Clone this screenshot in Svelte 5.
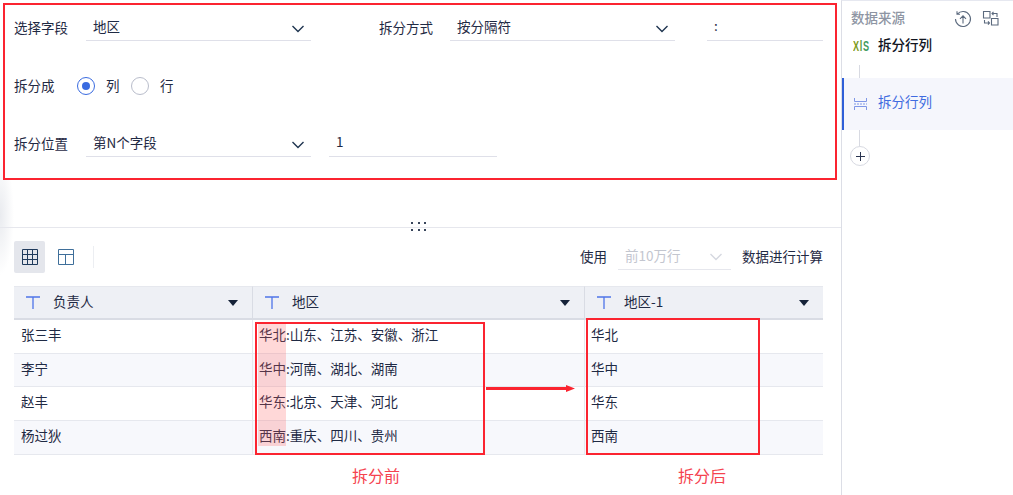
<script>
  let rows = [
    { name: '张三丰', region: '华北:山东、江苏、安徽、浙江', first: '华北' },
    { name: '李宁', region: '华中:河南、湖北、湖南', first: '华中' },
    { name: '赵丰', region: '华东:北京、天津、河北', first: '华东' },
    { name: '杨过狄', region: '西南:重庆、四川、贵州', first: '西南' }
  ]
  let columns = ['负责人', '地区', '地区-1']
</script>

<div class="app">
  <div class="main">
    <section class="panel">
      <div class="form-row">
        <span class="label">选择字段</span>
        <div class="select w225"><span>地区</span><svg class="chev" viewBox="0 0 14 8"><path d="M1.5 1 7 6.5 12.5 1" /></svg></div>
        <span class="label second">拆分方式</span>
        <div class="select w225"><span>按分隔符</span><svg class="chev" viewBox="0 0 14 8"><path d="M1.5 1 7 6.5 12.5 1" /></svg></div>
        <div class="input sep">:</div>
      </div>
      <div class="form-row">
        <span class="label narrow">拆分成</span>
        <span class="radio on"></span><span class="radio-text">列</span>
        <span class="radio"></span><span class="radio-text">行</span>
      </div>
      <div class="form-row">
        <span class="label">拆分位置</span>
        <div class="select w225"><span>第N个字段</span><svg class="chev" viewBox="0 0 14 8"><path d="M1.5 1 7 6.5 12.5 1" /></svg></div>
        <div class="input num">1</div>
      </div>
    </section>

    <div class="splitter">
      <div class="grip">
        {#each Array(6) as _}<i></i>{/each}
      </div>
    </div>

    <div class="toolbar">
      <button class="tool active" aria-label="表格">
        <svg viewBox="0 0 16 16" width="16" height="16"><path d="M.5.5h15v15H.5zM5.5.5v15M10.5.5v15M.5 5.5h15M.5 10.5h15" /></svg>
      </button>
      <button class="tool" aria-label="布局">
        <svg viewBox="0 0 16 16" width="16" height="16"><path d="M.5.5h15v15H.5zM.5 5.5h15M7.5 5.5v10" /></svg>
      </button>
      <span class="tool-sep"></span>
      <span class="spacer"></span>
      <span class="use">使用</span>
      <div class="limit"><span>前10万行</span><svg class="chev light" viewBox="0 0 14 8"><path d="M1.5 1 7 6.5 12.5 1" /></svg></div>
      <span class="calc">数据进行计算</span>
    </div>

    <div class="table-wrap">
      <table>
        <colgroup>
          <col style="width: 239px" />
          <col style="width: 332px" />
          <col style="width: 238px" />
        </colgroup>
        <thead>
          <tr>
            {#each columns as col}
              <th>
                <div class="th-in">
                  <svg class="t-icon" viewBox="0 0 14 13"><path d="M0 1h14M7 1v12" /></svg>
                  <span>{col}</span>
                  <i class="tri"></i>
                </div>
              </th>
            {/each}
          </tr>
        </thead>
        <tbody>
          {#each rows as row}
            <tr>
              <td>{row.name}</td>
              <td>{row.region}</td>
              <td>{row.first}</td>
            </tr>
          {/each}
        </tbody>
      </table>
      <!-- annotations drawn over the table -->
      <div class="mark-fill"></div>
      <div class="mark before"></div>
      <div class="mark after"></div>
      <svg class="arrow" viewBox="0 0 90 8" width="90" height="8"><path d="M0 2h80V0l9 3.500-9 3.500V5H0z" /></svg>
    </div>

    <div class="captions">
      <span class="cap-before">拆分前</span>
      <span class="cap-after">拆分后</span>
    </div>
  </div>

  <aside class="side">
    <div class="side-head">
      <span class="side-title">数据来源</span>
      <svg class="head-icon" viewBox="0 0 16 16" width="16" height="16"><path d="M2.400 3A7.500 7.500 0 1 1 .5 8M2 .3v3h3M8 12.500V5M5 7.800 8 4.800l3 3" /></svg>
      <svg class="head-icon" viewBox="0 0 16 16" width="16" height="16"><path d="M.5.5h6.500V7H.5zM8.500 7.500H15V14H8.500zM9 2.500h5v3.500M10.500.8 9 2.500l1.500 1.700M6.500 12H1.500V9M5 10.300 6.500 12 5 13.700" /></svg>
    </div>
    <div class="source">
      <span class="xls"><span class="x">X</span><span class="l">l</span><span class="s">S</span></span>
      <span class="source-name">拆分行列</span>
    </div>
    <div class="line top"></div>
    <div class="step">
      <svg viewBox="0 0 13 12" width="13" height="12"><path d="M.5 0v3.500h12V0M.5 12V8.500h12V12" /><path class="dash" d="M0 6h13" /></svg>
      <span>拆分行列</span>
    </div>
    <div class="line bottom"></div>
    <button class="add" aria-label="添加">
      <svg viewBox="0 0 9 9" width="9" height="9"><path d="M4.500 0v9M0 4.500h9" /></svg>
    </button>
  </aside>
</div>

<style>
  :global(body) {
    margin: 0;
    background: #fff;
    color: #1f2a44;
    font-family: "Noto Sans CJK SC", "Liberation Sans", sans-serif;
    font-size: 13.5px;
  }

  .app {
    display: flex;
    width: 1013px;
    height: 495px;
    overflow: hidden;
  }

  .main {
    width: 841px;
    flex-shrink: 0;
    background: radial-gradient(14px 60px at 0 215px, #e9ebef, rgba(255, 255, 255, 0));
  }

  .panel {
    box-sizing: border-box;
    width: 834px;
    height: 177px;
    margin: 3px 0 0 3px;
    padding: 12px 0 0 9px;
    border: 2px solid #fb2430;
    background: #fff;
    display: flex;
    flex-direction: column;
    gap: 34px;
  }

  .form-row {
    display: flex;
    align-items: center;
    height: 24px;
  }

  .label {
    width: 72px;
    flex-shrink: 0;
    margin-top: -4px;
  }
  .label.narrow { width: 63px; }
  .label.second { margin-left: 68px; width: 71px; }

  .select {
    box-sizing: border-box;
    height: 24px;
    padding: 0 6px 0 7px;
    border-bottom: 1.5px solid #dfe0e9;
    display: flex;
    align-items: center;
    justify-content: space-between;
  }
  .select span { margin-top: -6px; }
  .w225 { width: 225px; }

  .chev {
    width: 14px;
    height: 8px;
    fill: none;
    stroke: #1f3550;
    stroke-width: 1.4;
  }
  .chev.light { stroke: #d5d8e0; }

  .input {
    box-sizing: border-box;
    height: 24px;
    padding: 0 7px;
    border-bottom: 1.5px solid #dfe0e9;
    line-height: 17px;
  }
  .input.sep { width: 116px; margin-left: 32px; }
  .input.num { width: 168px; margin-left: 18px; }

  .radio {
    box-sizing: border-box;
    width: 18px;
    height: 18px;
    margin-top: -2px;
    border: 1px solid #b9bdcb;
    border-radius: 50%;
    position: relative;
  }
  .radio.on { border-color: #3a6be0; }
  .radio.on::after {
    content: '';
    position: absolute;
    inset: 4px;
    border-radius: 50%;
    background: #3a6be0;
  }
  .radio-text { margin: -5px 11.5px 0 11px; }

  .splitter {
    height: 47px;
    border-bottom: 1px solid #e6e7ed;
    position: relative;
  }
  .grip {
    position: absolute;
    left: 411px;
    top: 42px;
    display: grid;
    grid-template-columns: repeat(3, 2px);
    column-gap: 4.5px;
    row-gap: 5px;
  }
  .grip i {
    height: 2px;
    background: #39465c;
  }

  .toolbar {
    display: flex;
    align-items: center;
    height: 32px;
    margin: 13px 18px 0 14px;
  }

  .tool {
    width: 31px;
    height: 32px;
    padding: 0;
    border: 0;
    border-radius: 2px;
    background: none;
    display: flex;
    align-items: center;
    justify-content: center;
    margin-right: 5px;
  }
  .tool.active { background: #e4e6ec; }
  .tool svg {
    fill: none;
    stroke: #1f3a5c;
    stroke-width: 1;
  }
  .tool + .tool svg { stroke: #3f6f9a; }

  .tool-sep {
    width: 1px;
    height: 22px;
    margin-left: 7px;
    background: #eceef2;
  }
  .spacer { flex: 1; }

  .use, .calc { margin-top: -3px; }

  .limit {
    box-sizing: border-box;
    width: 113px;
    height: 26px;
    margin: 0 11px;
    padding: 0 8px 0 7px;
    border-bottom: 1px solid #e6e7ed;
    color: #c3c6cf;
    display: flex;
    align-items: center;
    justify-content: space-between;
  }
  .limit span { margin-top: -3px; }

  .table-wrap {
    position: relative;
    width: 809px;
    margin: 13px 0 0 14px;
  }

  table {
    width: 809px;
    table-layout: fixed;
    border-collapse: separate;
    border-spacing: 0;
  }

  th {
    box-sizing: border-box;
    height: 34px;
    padding: 0 14px 0 12px;
    background: #eef0f5;
    border-top: 1px solid #e6e8ee;
    border-right: 1px solid #d9dce4;
    border-bottom: 2px solid #d9dce4;
    font-weight: 400;
    text-align: left;
  }
  th:last-child { border-right: 0; }

  .th-in {
    display: flex;
    align-items: center;
    gap: 13px;
  }
  .th-in span { flex: 1; margin-top: -3px; }

  .t-icon {
    width: 14px;
    height: 13px;
    fill: none;
    stroke: #4f74e8;
    stroke-width: 1.3;
  }

  .tri {
    width: 0;
    height: 0;
    border-left: 5px solid transparent;
    border-right: 5px solid transparent;
    border-top: 6px solid #152238;
  }

  td {
    box-sizing: border-box;
    height: 34px;
    padding: 0 7px 5px;
    border-bottom: 1px solid #e6e8ee;
    border-right: 1px solid #e6e8ee;
  }
  td + td { padding-left: 6px; }
  td:last-child { border-right: 0; }
  tbody tr:nth-child(2) td { height: 33px; }
  tbody tr:nth-child(even) td { background: #f7f8fc; }

  .mark {
    position: absolute;
    box-sizing: border-box;
    border: 2px solid #fb2430;
    pointer-events: none;
  }
  .mark.before { left: 241px; top: 36px; width: 230px; height: 133px; }
  .mark.after { left: 572px; top: 32px; width: 174px; height: 137px; }

  .mark-fill {
    position: absolute;
    left: 244px;
    top: 37px;
    width: 28px;
    height: 123px;
    background: rgba(255, 90, 90, 0.24);
  }

  .arrow {
    position: absolute;
    left: 472px;
    top: 99px;
    fill: #fb2430;
  }

  .captions {
    margin: 8px 0 0 14px;
    display: grid;
    grid-template-columns: 238px 332px 238px;
    color: #f5434f;
    font-size: 16px;
  }
  .cap-before { grid-column: 2; padding-left: 100px; }
  .cap-after { grid-column: 3; padding-left: 94px; }

  .side {
    flex: 1;
    border-left: 1px solid #dcdee6;
    border-top: 1px solid #e6e8f0;
  }

  .side-head {
    display: flex;
    align-items: center;
    height: 34px;
    padding-left: 9px;
  }
  .side-title {
    width: 104px;
    margin-top: -3px;
    color: #8e95a3;
    font-weight: 500;
  }
  .head-icon {
    fill: none;
    stroke: #5c6a7e;
    stroke-width: 1.1;
    margin: 2px 12px 0 0;
    overflow: visible;
  }

  .source {
    display: flex;
    align-items: center;
    height: 22px;
    padding-left: 11px;
  }
  .xls {
    width: 25px;
    flex-shrink: 0;
    font: 700 14px "Liberation Sans", sans-serif;
    display: flex;
    transform: scaleX(0.65);
    transform-origin: left center;
  }
  .xls .x { color: #7d9b20; }
  .xls .l { color: #5a9a3a; margin: 0 1px; }
  .xls .s { color: #3f9b5e; }
  .source-name {
    margin-top: -5px;
    font-weight: 500;
    color: #10141e;
  }

  .line {
    width: 1px;
    margin-left: 17px;
    background: #d8dae2;
  }
  .line.top { height: 13px; margin-top: 8px; }
  .line.bottom { height: 16px; }

  .step {
    display: flex;
    align-items: center;
    height: 52px;
    padding-left: 10px;
    background: #f5f6fc;
    border-left: 2px solid #2f5fd8;
    gap: 11px;
    color: #3f6be0;
  }
  .step span { margin-top: -6px; }
  .step svg {
    fill: none;
    stroke: #7f97e6;
    stroke-width: 1;
  }
  .step .dash { stroke-dasharray: 2 1; }

  .add {
    width: 20px;
    height: 20px;
    margin-left: 8px;
    padding: 0;
    border: 1px solid #d8dae2;
    border-radius: 50%;
    background: #fff;
    display: flex;
    align-items: center;
    justify-content: center;
  }
  .add svg {
    fill: none;
    stroke: #2a3550;
    stroke-width: 1;
  }
</style>
